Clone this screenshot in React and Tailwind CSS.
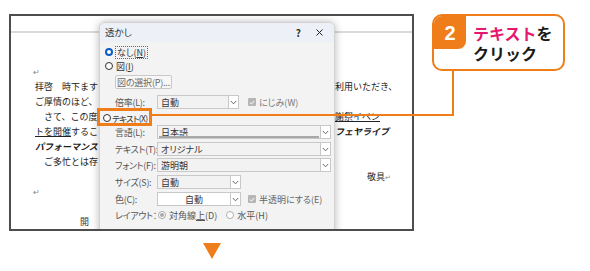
import React from "react";

function Chevron() {
  return (
    <svg width="7" height="5" viewBox="0 0 7 5">
      <path d="M0.8 1 L3.5 3.8 L6.2 1" fill="none" stroke="#555" strokeWidth="0.9" />
    </svg>
  );
}

function Select({ className, value, white, center, underline }) {
  return (
    <div
      className={`relative flex shrink-0 h-[14px] border border-[#c8c8c8] ${white ? "bg-white" : "bg-[#f2f2f2]"} ${className}`}
    >
      <div
        className={`flex-1 flex items-center px-[3px] text-[9px] leading-none text-[#333] ${center ? "justify-center" : ""}`}
      >
        {value}
      </div>
      <div className="w-[10px] flex items-center justify-center border-l border-[#c8c8c8] bg-white">
        <Chevron />
      </div>
      {underline && <div className="absolute left-[1px] right-[11px] bottom-0 h-[2px] bg-[#a8a8a8]" />}
    </div>
  );
}

function Radio({ kind }) {
  if (kind === "on")
    return <div className="w-[8px] h-[8px] rounded-full border-[2.5px] border-[#0b5cc5] bg-white shrink-0" />;
  if (kind === "dis-on")
    return (
      <div className="w-[8px] h-[8px] rounded-full border border-[#a8a8a8] bg-white shrink-0 flex items-center justify-center">
        <div className="w-[4px] h-[4px] rounded-full bg-[#a8a8a8]" />
      </div>
    );
  if (kind === "dis")
    return <div className="w-[8px] h-[8px] rounded-full border border-[#b0b0b0] bg-white shrink-0" />;
  return <div className="w-[8px] h-[8px] rounded-full border border-[#333] bg-[#fafafa] shrink-0" />;
}

function Check() {
  return (
    <div className="w-[8px] h-[8px] rounded-[1px] bg-[#b6b6b6] flex items-center justify-center shrink-0">
      <svg width="6" height="5" viewBox="0 0 6 5">
        <path d="M0.8 2.6 L2.4 4 L5.2 1" fill="none" stroke="#fff" strokeWidth="1" />
      </svg>
    </div>
  );
}

function DocLine({ left, right, leftClass = "", rightClass = "" }) {
  return (
    <div className="flex h-[15px] items-center whitespace-nowrap">
      <div className={`w-[64px] shrink-0 overflow-hidden ${leftClass}`}>{left}</div>
      <div className={`ml-[236px] ${rightClass}`}>{right}</div>
    </div>
  );
}

function Label({ children }) {
  return <span className="w-[42px] shrink-0 text-[#555] tracking-[-0.3px]">{children}</span>;
}

function Dialog() {
  return (
    <div className="absolute left-[88px] top-[6px] w-[236px] h-[260px] bg-[#f3f3f3] border border-[#d2d2d2] rounded-t-[6px] shadow-[0_0_8px_rgba(0,0,0,0.28)] overflow-hidden text-[9px] leading-none text-[#333] whitespace-nowrap [font-feature-settings:'palt']">
      <div className="h-[19px] bg-[#edf1f7] flex items-center pl-[5px] pr-[11px]">
        <span className="text-[9.5px]">透かし</span>
        <span className="ml-auto text-[10px] font-bold text-[#333]">?</span>
        <svg className="ml-[15px]" width="7" height="7" viewBox="0 0 7 7">
          <path d="M0.5 0.5 L6.5 6.5 M6.5 0.5 L0.5 6.5" stroke="#222" strokeWidth="1" />
        </svg>
      </div>
      <div className="flex flex-col pl-[5px]">
        <div className="mt-[4px] h-[12px] flex items-center gap-[2px]">
          <Radio kind="on" />
          <span className="border border-dotted border-[#666] px-[1px] py-[1px]">
            なし(<span className="underline">N</span>)
          </span>
        </div>
        <div className="mt-[2px] h-[12px] flex items-center gap-[3px]">
          <Radio />
          <span>
            図(<span className="underline">I</span>)
          </span>
        </div>
        <div className="mt-[3px] ml-[10px] w-[57px] h-[14px] border border-[#c9c9c9] bg-[#f7f7f7] rounded-[2px] text-[#6a6a6a] flex items-center justify-center tracking-[-0.2px]">
          図の選択(P)...
        </div>
        <div className="mt-[6px] h-[14px] flex items-center pl-[10px]">
          <Label>倍率(L):</Label>
          <Select className="w-[82px]" value="自動" />
          <div className="ml-[9px] flex items-center gap-[3px] text-[#7a7a7a]">
            <Check />
            <span>にじみ(W)</span>
          </div>
        </div>
        <div className="mt-[3px] h-[12px] -ml-[2px] flex items-center gap-[1px]">
          <Radio />
          <span className="text-[8.5px] tracking-[-0.7px]">
            テキスト(<span className="underline">X</span>)
          </span>
        </div>
        <div className="mt-[1px] h-[14px] flex items-center pl-[10px]">
          <Label>言語(L):</Label>
          <Select className="w-[174px]" value="日本語" underline />
        </div>
        <div className="mt-[3px] h-[14px] flex items-center pl-[10px]">
          <Label>テキスト(T):</Label>
          <Select className="w-[174px]" value="オリジナル" />
        </div>
        <div className="mt-[2px] h-[14px] flex items-center pl-[10px]">
          <Label>フォント(F):</Label>
          <Select className="w-[174px]" value="游明朝" />
        </div>
        <div className="mt-[3px] h-[14px] flex items-center pl-[10px]">
          <Label>サイズ(S):</Label>
          <Select className="w-[84px]" value="自動" />
        </div>
        <div className="mt-[3px] h-[14px] flex items-center pl-[10px]">
          <Label>色(C):</Label>
          <Select className="w-[84px]" value="自動" white center />
          <div className="ml-[7px] flex items-center gap-[3px] text-[#666]">
            <Check />
            <span>半透明にする(E)</span>
          </div>
        </div>
        <div className="mt-[3px] h-[12px] flex items-center pl-[10px] text-[#555]">
          <span className="w-[43px] shrink-0 tracking-[-0.3px]">レイアウト：</span>
          <Radio kind="dis-on" />
          <span className="ml-[3px]">
            対角線<span className="underline">上</span>(D)
          </span>
          <div className="ml-[9px]">
            <Radio kind="dis" />
          </div>
          <span className="ml-[3px]">水平(H)</span>
        </div>
        <div className="mt-[8px] ml-[74px] flex gap-[6px]">
          <div className="w-[45px] h-[16px] border border-[#c8c8c8] rounded-[3px] bg-[#fbfbfb]" />
          <div className="w-[48px] h-[16px] border border-[#c8c8c8] rounded-[3px] bg-[#fbfbfb]" />
          <div className="w-[47px] h-[16px] border border-[#c8c8c8] rounded-[3px] bg-[#fbfbfb]" />
        </div>
      </div>
    </div>
  );
}

export default function App() {
  return (
    <div className="relative w-[590px] h-[271px] overflow-hidden bg-white flex items-start pt-[14px] pl-[9px] font-['Noto_Sans_CJK_JP','Noto_Sans',sans-serif]">
      <div className="flex flex-col items-center">
        <div className="relative w-[405px] h-[217px] border-2 border-[#4d4d4d] overflow-hidden bg-white">
          <div className="mt-[15px] h-[2px] bg-[#dadada]" />
          <div className="mt-[31px] pl-[24px] pr-[21px] text-[9px] leading-[15px] text-[#222]">
            <div className="h-[15px] text-[8px] text-[#888] -ml-[2px]">↵</div>
            <DocLine left="拝啓　時下ます" right="利用いただき、" />
            <DocLine left="ご厚情のほど、" right="" />
            <DocLine left="　さて、この度" right="謝祭イベン" rightClass="underline" />
            <DocLine
              left={
                <span>
                  <span className="underline">トを開催</span>するこ
                </span>
              }
              right="フェヤライブ"
              rightClass="font-bold italic"
            />
            <DocLine left="パフォーマンス" leftClass="font-bold italic" right="" />
            <DocLine left="　ご多忙とは存" right="" />
            <div className="h-[15px] flex justify-end">
              <span>
                敬具<span className="text-[7px] text-[#888]">↵</span>
              </span>
            </div>
            <div className="h-[15px] text-[8px] text-[#888] -ml-[2px]">↵</div>
            <div className="h-[15px]" />
            <div className="h-[15px] pl-[45px] text-[#333]">開</div>
          </div>
          <Dialog />
        </div>
        <svg className="mt-[12px]" width="18" height="16" viewBox="0 0 18 16">
          <path d="M0 0 H18 L9 16 Z" fill="#ef7d1a" />
        </svg>
      </div>

      <div className="ml-[18px] w-[133px] h-[57px] border-2 border-[#ef7d1a] rounded-[10px] bg-white flex overflow-hidden">
        <div className="w-[32px] h-[33px] shrink-0 bg-[#ef7d1a] rounded-br-[8px] flex items-center justify-center text-white font-bold text-[20px] leading-none font-['Liberation_Sans',sans-serif]">
          2
        </div>
        <div className="pl-[7px] pt-[7px] text-[16px] leading-[20px] font-bold text-[#1a1a1a]">
          <div>
            <span className="text-[#e5176e]">テキスト</span>を
          </div>
          <div>クリック</div>
        </div>
      </div>

      <div className="absolute left-[97px] top-[108px] w-[55px] h-[18px] border-[3px] border-[#ef7d1a]" />
      <svg className="absolute left-0 top-0 pointer-events-none" width="590" height="271" viewBox="0 0 590 271">
        <path d="M152 115 H453 V71" fill="none" stroke="#ef7d1a" strokeWidth="2" />
      </svg>
    </div>
  );
}
